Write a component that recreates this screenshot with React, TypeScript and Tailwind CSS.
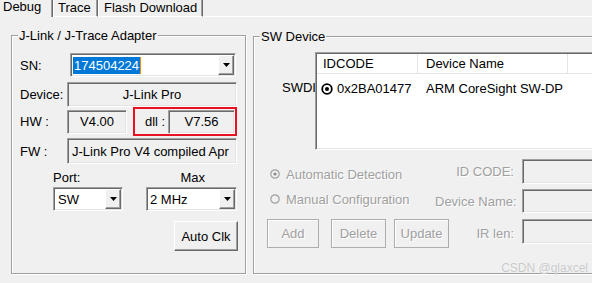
import React from 'react'

const ui = "font-['Liberation_Sans',Arial,sans-serif] text-[13px] leading-[15px] text-black"
const dim = 'text-[#a0a0a0] [text-shadow:1px_1px_0_#ffffff]'

const sunken2 =
  'border border-t-[#a0a0a0] border-l-[#a0a0a0] border-b-white border-r-white shadow-[inset_1px_1px_0_#696969,inset_-1px_-1px_0_#e3e3e3]'
const raised =
  'border border-t-white border-l-white border-b-[#696969] border-r-[#696969] shadow-[inset_-1px_-1px_0_#a0a0a0]'
const groupBox =
  'relative border border-[#a0a0a0] shadow-[inset_1px_1px_0_#ffffff,1px_1px_0_#ffffff]'

function Arrow() {
  return (
    <svg width="7" height="4" viewBox="0 0 7 4">
      <path d="M0 0h7L3.5 4z" fill="#000" />
    </svg>
  )
}

function Combo({ className, children }: { className: string; children: React.ReactNode }) {
  return (
    <div className={`flex bg-white p-[1px] ${sunken2} ${className}`}>
      <div className="flex flex-1 items-center overflow-hidden whitespace-nowrap pl-[1px]">{children}</div>
      <div className={`flex w-[16px] items-center justify-center bg-[#f0f0f0] ${raised}`}>
        <Arrow />
      </div>
    </div>
  )
}

function Radio({ checked }: { checked?: boolean }) {
  return (
    <svg width="10" height="10" viewBox="0 0 10 10" className="shrink-0">
      <circle cx="5" cy="5" r="4.2" fill="#f0f0f0" stroke="#a0a0a0" strokeWidth={1.2} />
      {checked && <circle cx="5" cy="5" r={1.6} fill="#8c8c8c" />}
    </svg>
  )
}

function ListRadio() {
  return (
    <svg width="12" height="12" viewBox="0 0 12 12" className="shrink-0">
      <circle cx="6" cy="6" r="4.8" fill="#fff" stroke="#000" strokeWidth={1.8} />
      <circle cx="6" cy="6" r={2} fill="#000" />
    </svg>
  )
}

function DimButton({ className, label }: { className: string; label: string }) {
  return (
    <div
      className={`flex h-[29px] items-center justify-center border border-[#adadad] shadow-[inset_1px_1px_0_#ffffff] ${dim} ${className}`}
    >
      {label}
    </div>
  )
}

function Legend({ text }: { text: string }) {
  return <div className="absolute -top-[8px] left-[6px] bg-[#f0f0f0] px-[1px] leading-[15px]">{text}</div>
}

export default function App() {
  return (
    <div className={`relative h-[283px] w-[592px] overflow-hidden bg-[#f0f0f0] ${ui}`}>
      {/* tab strip */}
      <div className="flex h-[17px]">
        <div className="h-[17px] w-[53px] border-r border-r-[#696969] pl-[3px] leading-[13px] shadow-[inset_-1px_0_0_#a0a0a0]">
          Debug
        </div>
        <div className="h-[17px] w-[45px] border-b border-l border-r border-b-white border-l-white border-r-[#696969] pl-[4px] pt-[1px] leading-[13px] shadow-[inset_-1px_0_0_#a0a0a0]">
          Trace
        </div>
        <div className="h-[17px] w-[105px] border-b border-l border-r border-b-white border-l-white border-r-[#696969] pl-[5px] pt-[1px] leading-[13px] shadow-[inset_-1px_0_0_#a0a0a0]">
          Flash Download
        </div>
        <div className="h-[17px] flex-1 border-b border-b-white" />
      </div>

      <div className="flex items-start pl-[11px]">
        {/* J-Link adapter */}
        <div className={`mt-[18px] h-[239px] w-[235px] shrink-0 ${groupBox}`}>
          <Legend text="J-Link / J-Trace Adapter" />

          <div className="mt-[17px] flex h-[24px] items-center">
            <span className="ml-[8px] w-[50px]">SN:</span>
            <Combo className="h-[24px] w-[166px]">
              <span className="bg-[#0078d7] px-[1px] leading-[17px] text-white">174504224</span>
              <span className="h-[17px] w-[1px] bg-[#ff8c00]" />
            </Combo>
          </div>

          <div className="mt-[5px] flex h-[25px] items-center">
            <span className="ml-[8px] w-[47px]">Device:</span>
            <div className={`flex h-[25px] w-[170px] items-center justify-center ${sunken2}`}>J-Link Pro</div>
          </div>

          <div className="flex h-[29px] items-center">
            <span className="ml-[8px] w-[47px]">HW :</span>
            <div className={`flex h-[24px] w-[60px] items-center justify-center ${sunken2}`}>V4.00</div>
            <div className="ml-[6px] flex h-[29px] w-[104px] items-center border-2 border-[#e81123]">
              <span className="ml-[10px] w-[23px]">dll :</span>
              <div className={`flex h-[24px] w-[67px] items-center justify-center ${sunken2}`}>V7.56</div>
            </div>
          </div>

          <div className="mt-[2px] flex h-[26px] items-center">
            <span className="ml-[8px] w-[47px]">FW :</span>
            <div className={`flex h-[26px] w-[170px] items-center overflow-hidden whitespace-nowrap pl-[4px] ${sunken2}`}>
              J-Link Pro V4 compiled Apr
            </div>
          </div>

          <div className="mt-[6px] flex h-[15px]">
            <span className="ml-[41px]">Port:</span>
            <span className="ml-[100px]">Max</span>
          </div>

          <div className="mt-[2px] flex h-[24px]">
            <Combo className="ml-[41px] h-[24px] w-[70px]">
              <span className="pl-[2px]">SW</span>
            </Combo>
            <Combo className="ml-[23px] h-[24px] w-[91px]">
              <span className="pl-[1px]">2 MHz</span>
            </Combo>
          </div>

          <div className="mt-[10px] flex">
            <div className={`ml-[162px] flex h-[30px] w-[64px] items-center justify-center bg-[#f0f0f0] ${raised}`}>
              Auto Clk
            </div>
          </div>
        </div>

        {/* SW Device */}
        <div className={`ml-[7px] mt-[19px] h-[238px] w-[360px] shrink-0 ${groupBox}`}>
          <Legend text="SW Device" />

          <div className="mt-[15px] flex">
            <span className="ml-[28px] mt-[28px] w-[33px] whitespace-nowrap">SWDI</span>
            <div className={`h-[98px] w-[300px] bg-white ${sunken2} p-[1px]`}>
              <div className="flex h-[20px] items-center border-b border-b-[#e5e5e5]">
                <div className="flex h-full w-[101px] items-center border-r border-r-[#e5e5e5] pl-[6px]">IDCODE</div>
                <div className="flex h-full w-[150px] items-center border-r border-r-[#e5e5e5] pl-[8px]">Device Name</div>
              </div>
              <div className="mt-[6px] flex h-[17px] items-center">
                <div className="flex w-[101px] items-center gap-[4px] pl-[4px]">
                  <ListRadio />
                  <span>0x2BA01477</span>
                </div>
                <div className="pl-[8px]">ARM CoreSight SW-DP</div>
              </div>
            </div>
          </div>

          <div className="mt-[9px] flex h-[25px] items-center">
            <div className={`mt-[5px] flex w-[181px] items-center gap-[6px] pl-[16px] ${dim}`}>
              <Radio checked />
              <span>Automatic Detection</span>
            </div>
            <span className={`w-[79px] whitespace-nowrap text-right ${dim}`}>ID CODE:</span>
            <div className={`ml-[8px] h-[25px] w-[90px] ${sunken2}`} />
          </div>

          <div className="mt-[5px] flex h-[24px] items-center">
            <div className={`mb-[4px] flex w-[181px] items-center gap-[6px] pl-[16px] ${dim}`}>
              <Radio />
              <span>Manual Configuration</span>
            </div>
            <span className={`w-[79px] whitespace-nowrap text-right ${dim}`}>Device Name:</span>
            <div className={`ml-[8px] h-[24px] w-[90px] ${sunken2}`} />
          </div>

          <div className="mt-[6px] flex h-[29px] items-start">
            <div className="flex w-[181px] pl-[13px]">
              <DimButton className="w-[52px] shrink-0" label="Add" />
              <DimButton className="ml-[12px] w-[55px] shrink-0" label="Delete" />
              <DimButton className="ml-[8px] w-[55px] shrink-0" label="Update" />
            </div>
            <span className={`mt-[7px] w-[79px] whitespace-nowrap text-right ${dim}`}>IR len:</span>
            <div className={`ml-[8px] h-[25px] w-[90px] ${sunken2}`} />
          </div>
        </div>
      </div>

      <div className="absolute right-[4px] top-[261px] font-['Liberation_Sans',Arial,sans-serif] text-[12px] leading-[14px] text-[#c8c8c8] [text-shadow:0_0_1px_#ffffff]">
        CSDN @qlaxcel
      </div>
    </div>
  )
}
